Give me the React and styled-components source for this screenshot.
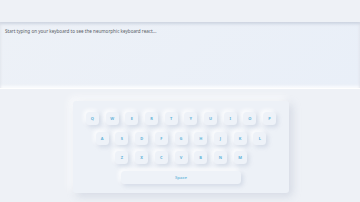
import styled, { createGlobalStyle } from 'styled-components';

const GlobalStyle = createGlobalStyle`
html, body {
    margin: 0;
    padding: 0;
    background: #eef1f6;
    font-family: "Noto Sans", "Liberation Sans", sans-serif;
}
`;

const rows = [
    ['Q', 'W', 'E', 'R', 'T', 'Y', 'U', 'I', 'O', 'P'],
    ['A', 'S', 'D', 'F', 'G', 'H', 'J', 'K', 'L'],
    ['Z', 'X', 'C', 'V', 'B', 'N', 'M'],
];

const App = () => {
    return (
        <Page>
            <GlobalStyle />
            <Display>
                Start typing on your keyboard to see the neumorphic keyboard react...
            </Display>
            <Keyboard>
                {rows.map((row, i) => (
                    <Row key={i}>
                        {row.map((k) => (
                            <Key key={k}>{k}</Key>
                        ))}
                    </Row>
                ))}
                <Row>
                    <SpaceKey>Space</SpaceKey>
                </Row>
            </Keyboard>
        </Page>
    );
};

const Page = styled.div`
width: 360px;
height: 202px;
overflow: hidden;
padding-top: 22px;
box-sizing: border-box;
display: flex;
flex-direction: column;
align-items: center;
background: #eef1f6;
`;

const Display = styled.div`
width: 100%;
height: 66px;
box-sizing: border-box;
padding: 6px 5px;
background: linear-gradient(135deg, #edf1f7, #e9eff8);
box-shadow: inset 0 2px 3px rgba(160, 170, 190, 0.4), inset 0 -2px 3px rgba(255, 255, 255, 0.8), 0 1px 0 rgba(255, 255, 255, 0.9);
color: #5a5f68;
font-size: 4.6px;
line-height: 6px;
`;

const Keyboard = styled.div`
margin-top: 13px;
margin-left: 2px;
width: 216px;
box-sizing: border-box;
padding: 11px 12px 9px;
display: flex;
flex-direction: column;
gap: 6.5px;
background: #edf1f7;
border-radius: 3px;
box-shadow: 3px 3px 8px rgba(170, 180, 200, 0.4), -3px -3px 8px rgba(255, 255, 255, 0.9);
`;

const Row = styled.div`
display: flex;
justify-content: center;
gap: 6.7px;
`;

const Key = styled.div`
width: 13px;
height: 13px;
border-radius: 3.5px;
display: flex;
align-items: center;
justify-content: center;
background: #eef2f8;
box-shadow: 2px 2px 4px rgba(170, 182, 205, 0.4), -2px -2px 4px rgba(255, 255, 255, 0.95);
color: #62b3d9;
font-size: 4px;
font-weight: 700;
`;

const SpaceKey = styled(Key)`
width: 120px;
height: 13px;
font-weight: 500;
font-size: 4.3px;
`;

export default App;
